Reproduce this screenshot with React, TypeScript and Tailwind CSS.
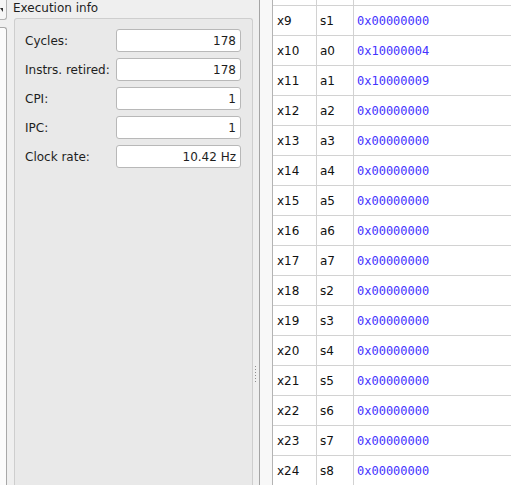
import React from 'react';

const stats = [
  { label: 'Cycles:', value: '178' },
  { label: 'Instrs. retired:', value: '178' },
  { label: 'CPI:', value: '1' },
  { label: 'IPC:', value: '1' },
  { label: 'Clock rate:', value: '10.42 Hz' },
];

const regs = [
  ['x9', 's1', '0x00000000'],
  ['x10', 'a0', '0x10000004'],
  ['x11', 'a1', '0x10000009'],
  ['x12', 'a2', '0x00000000'],
  ['x13', 'a3', '0x00000000'],
  ['x14', 'a4', '0x00000000'],
  ['x15', 'a5', '0x00000000'],
  ['x16', 'a6', '0x00000000'],
  ['x17', 'a7', '0x00000000'],
  ['x18', 's2', '0x00000000'],
  ['x19', 's3', '0x00000000'],
  ['x20', 's4', '0x00000000'],
  ['x21', 's5', '0x00000000'],
  ['x22', 's6', '0x00000000'],
  ['x23', 's7', '0x00000000'],
  ['x24', 's8', '0x00000000'],
];

function ExecutionInfo() {
  return (
    <div className="flex w-[252px] flex-col bg-[#efefef]">
      <div className="h-[18px] pl-[6px] pt-px leading-[14px] text-[#1e1e1e]">Execution info</div>
      <div className="flex flex-1">
        <div className="ml-[7px] w-[239px] rounded-t-[3px] border border-b-0 border-[#cecece] bg-[#e9e9e9] pl-[10px] pr-[11px] pt-[10px]">
          <div className="flex flex-col gap-[6px]">
            {stats.map((s) => (
              <div key={s.label} className="flex items-center">
                <span className="w-[91px] text-[#1e1e1e]">{s.label}</span>
                <div className="flex h-[23px] w-[125px] items-center justify-end rounded-[3px] border border-[#b8b8b8] bg-white pr-[4px] text-[#1e1e1e]">
                  {s.value}
                </div>
              </div>
            ))}
          </div>
        </div>
        {/* splitter handle */}
        <div className="flex w-[6px] flex-col gap-[2px] pl-[2px] pt-[348px]">
          {[0, 1, 2, 3, 4, 5].map((i) => (
            <div key={i} className="h-px w-px bg-[#8e8e8e]" />
          ))}
        </div>
      </div>
    </div>
  );
}

function RegisterTable() {
  return (
    <div className="flex-1 overflow-hidden border-l border-[#b4b4b4] bg-white">
      {/* tail of the row scrolled out above */}
      <div className="flex h-[6px] border-b border-[#d2d2d2]">
        <div className="w-[44px] border-r border-[#d2d2d2]" />
        <div className="w-[37px] border-r border-[#d2d2d2]" />
      </div>
      {regs.map(([n, abi, val]) => (
        <div key={n} className="flex h-[30px] border-b border-[#d2d2d2]">
          <div className="flex w-[44px] items-center border-r border-[#d2d2d2] pl-[4px] text-[#111]">{n}</div>
          <div className="flex w-[37px] items-center border-r border-[#d2d2d2] pl-[3px] text-[#111]">{abi}</div>
          <div className="flex flex-1 items-center pl-[3px] font-['DejaVu_Sans_Mono',monospace] text-[#4433ff]">{val}</div>
        </div>
      ))}
    </div>
  );
}

export default function App() {
  return (
    <div className="flex h-[485px] w-[511px] overflow-hidden bg-[#efefef] font-['DejaVu_Sans',sans-serif] text-[12px]">
      {/* left stub of the neighbouring dock */}
      <div className="flex w-[7px] flex-col">
        <div className="relative h-[20px] rounded-br-[3px] border-b border-r border-[#b3b3b3] bg-[#f6f6f6]">
          <div className="absolute left-0 top-[8px] h-0 w-0 border-l-[3px] border-t-[4px] border-l-transparent border-t-[#333]" />
        </div>
        <div className="mt-[7px] flex-1 rounded-tr-[3px] border-r border-t border-[#a8a8a8] bg-[#fbfbfb]" />
      </div>
      <ExecutionInfo />
      <div className="w-px bg-[#a4a4a4]" />
      <div className="w-[12px] bg-[#f8f8f8]" />
      <RegisterTable />
    </div>
  );
}
